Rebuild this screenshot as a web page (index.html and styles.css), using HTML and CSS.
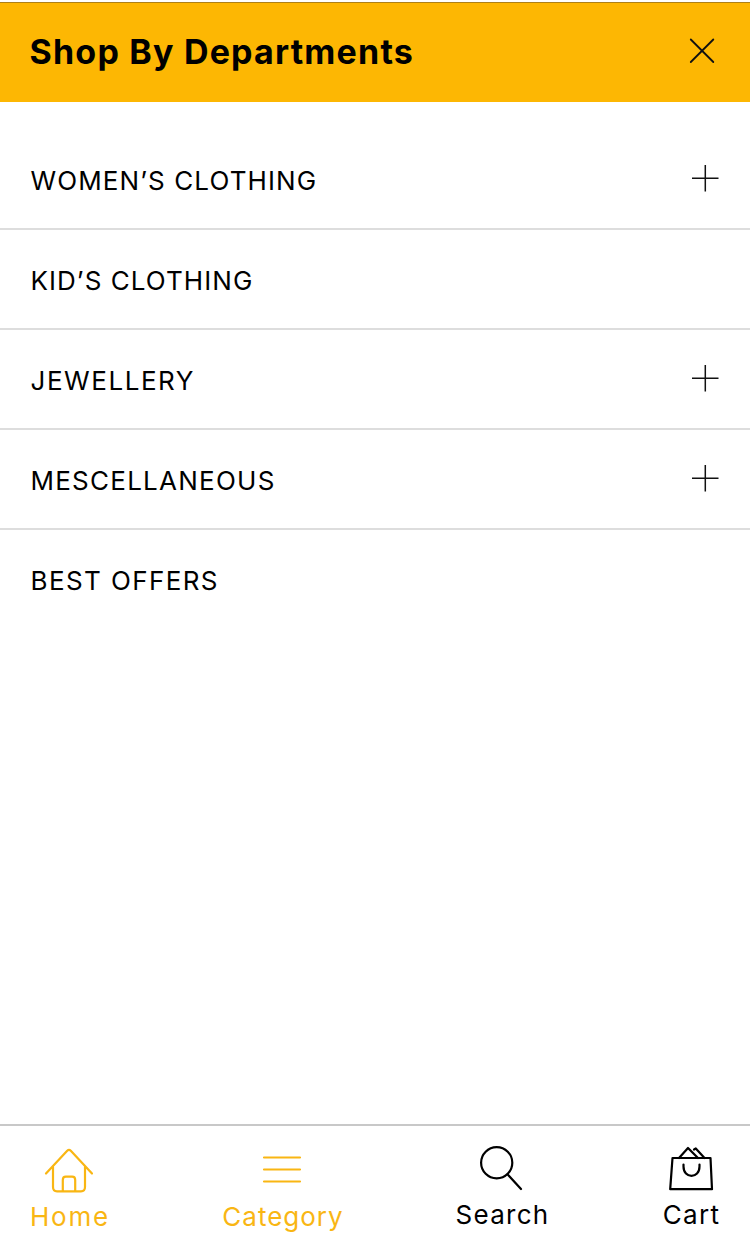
FILE: index.html
```html
<!DOCTYPE html>
<html lang="en">
<head>
<meta charset="utf-8">
<meta name="viewport" content="width=device-width, initial-scale=1">
<title>Shop By Departments</title>
<link rel="stylesheet" href="styles.css">
</head>
<body>
<div class="screen">
  <header class="header">
    <h1 class="title">Shop By Departments</h1>
    <svg class="close" viewBox="0 0 26 26"><path d="M1.800 1.500l22.500 22.500M24.300 1.500L1.800 24"/></svg>
  </header>
  <main class="departments">
    <div class="row"><span class="label women">WOMEN’S CLOTHING</span><svg class="plus" viewBox="0 0 28 28"><path d="M1 14.300h26.500M14.300 1v26.500"/></svg></div>
    <div class="row"><span class="label kids">KID’S CLOTHING</span></div>
    <div class="row"><span class="label jewellery">JEWELLERY</span><svg class="plus" viewBox="0 0 28 28"><path d="M1 14.300h26.500M14.300 1v26.500"/></svg></div>
    <div class="row"><span class="label misc">MESCELLANEOUS</span><svg class="plus" viewBox="0 0 28 28"><path d="M1 14.300h26.500M14.300 1v26.500"/></svg></div>
    <div class="row"><span class="label offers">BEST OFFERS</span></div>
  </main>
  <nav class="tabs">
    <a class="tab home active">
      <svg class="icon" width="50" height="50" viewBox="0 0 50 50"><path d="M2 27.500L23.200 4.700q1.800-1.800 3.600 0L48 27.500M9 21V41q0 4.300 4 4.300h24q4 0 4-4.300V21M18.800 45V34q0-3.300 3-3.300h6.400q3 0 3 3.300V45"/></svg>
      <span class="name">Home</span>
    </a>
    <a class="tab category active">
      <svg class="icon" width="50" height="50" viewBox="0 0 50 50"><path d="M7 11.500h36M7 23.500h36M7 35.500h36"/></svg>
      <span class="name">Category</span>
    </a>
    <a class="tab search">
      <svg class="icon" width="50" height="50" viewBox="0 0 50 50"><circle cx="18.700" cy="16.700" r="15.600"/><path d="M29.500 28.300L43 43"/></svg>
      <span class="name">Search</span>
    </a>
    <a class="tab cart">
      <svg class="icon" width="50" height="50" viewBox="0 0 50 50"><path d="M5.500 12h38L45 43.200H3.200zM12 12l9-10 10 10M27 3.500l1.800-1 8.700 9.500M16.500 18.500v2c0 12.500 16 12.500 16 0v-2"/></svg>
      <span class="name">Cart</span>
    </a>
  </nav>
</div>
</body>
</html>
```
FILE: styles.css
```css
* { box-sizing: border-box; }
body {
  margin: 0;
  background: #fff;
  color: #000;
  font-family: Inter, "Liberation Sans", sans-serif;
}
.screen {
  display: flex;
  flex-direction: column;
  height: 1258px;
  padding-top: 2px;
  overflow: hidden;
}
.header {
  display: flex;
  align-items: center;
  justify-content: space-between;
  height: 100px;
  padding: 0 35px 3px 29.5px;
  border-top: 1px solid #ad8019;
  background: #fdb703;
}
.title {
  margin: 2px 0 0;
  font-size: 34px;
  font-weight: 650;
  line-height: 40px;
  letter-spacing: 1.2px;
  white-space: nowrap;
}
.close, .plus { fill: none; stroke: #111; stroke-linecap: round; }
.close { width: 26px; height: 26px; stroke-width: 1.8; }
.plus { width: 28px; height: 28px; stroke-width: 1.5; stroke-linecap: butt; }
.departments { flex: 1; padding-top: 28px; }
.row {
  display: flex;
  align-items: center;
  justify-content: space-between;
  height: 100px;
  padding: 0 31px 0 30.5px;
  border-bottom: 2px solid #ddd;
}
.row:last-child { border-bottom-color: transparent; }
.plus { margin-bottom: 3px; }
.label {
  font-size: 26px;
  font-weight: 380;
  line-height: 32px;
  white-space: nowrap;
  padding-top: 3px;
}
.women { letter-spacing: 1.1px; }
.kids { letter-spacing: 1.05px; }
.jewellery { letter-spacing: 1.55px; }
.misc { letter-spacing: 1.25px; }
.offers { letter-spacing: 1.4px; }
.tabs {
  display: flex;
  justify-content: space-between;
  height: 134px;
  padding: 20px 30px 0;
  border-top: 2px solid #c8c8c8;
}
.tab {
  display: flex;
  flex-direction: column;
  align-items: center;
}
.active { color: #f9b613; }
.icon {
  flex: none;
  fill: none;
  stroke: currentColor;
  stroke-width: 2.2;
  stroke-linecap: round;
  stroke-linejoin: round;
}
.name {
  margin-top: 3px;
  font-size: 26px;
  line-height: 32px;
  letter-spacing: 1px;
}
.active .name { margin-top: 5px; padding-left: 2px; }
.home { width: 78px; }
.home .name { letter-spacing: 1.8px; }
.category { width: 120px; }
.search { width: 93px; }
.search .name { letter-spacing: 1.3px; }
.cart { width: 57px; }
.cart .name { letter-spacing: 1.3px; }
```
